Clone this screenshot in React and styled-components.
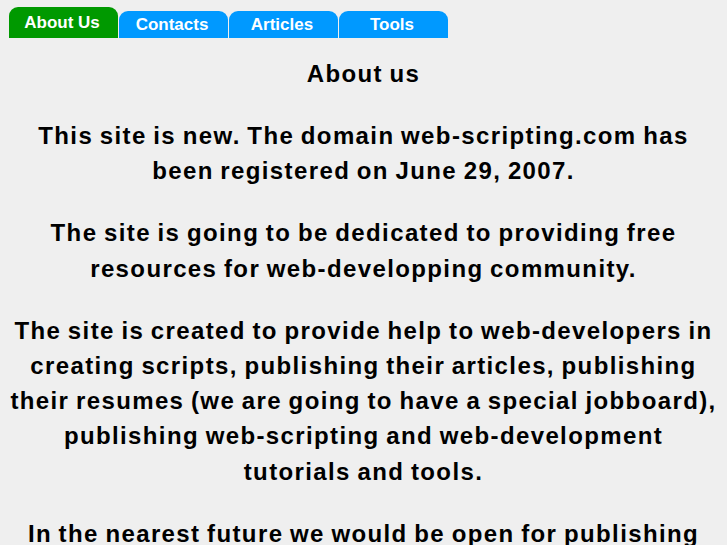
import React from 'react';
import styled, { createGlobalStyle } from 'styled-components';

const GlobalStyle = createGlobalStyle`
  body {
    margin: 0;
    background-color: #efefef;
    font-family: "Liberation Sans", Arial, sans-serif;
  }
`;

const Page = styled.div`
  padding: 7px 0 0 0;
`;

const TabBar = styled.div`
  display: flex;
  align-items: flex-end;
  gap: 1px;
  padding-left: 9px;
  height: 31px;
`;

const Tab = styled.a`
  display: flex;
  align-items: center;
  justify-content: center;
  width: 109px;
  height: ${(p) => (p.$active ? '31px' : '27px')};
  padding: 1px 3px 0 0;
  box-sizing: border-box;
  background-color: ${(p) => (p.$active ? '#009900' : '#0099ff')};
  color: #fff;
  font-weight: bold;
  font-size: 17px;
  text-decoration: none;
  border-radius: 9px 9px 0 0;
`;

// the original face is a bit wider than Arial, so stretch letters and pull words closer
const Content = styled.div`
  text-align: center;
  color: #000;
  font-weight: bold;
  letter-spacing: 1.38px;
  word-spacing: -1.4px;
  padding: 0 8px;
`;

const Heading = styled.h1`
  font-size: 24px;
  margin: 18px 0 27px;
  line-height: 35px;
`;

const Paragraph = styled.p`
  font-size: 24px;
  line-height: 35.2px;
  margin: 0 0 27px;
`;

const tabs = ['About Us', 'Contacts', 'Articles', 'Tools'];

export default function App() {
  return (
    <Page>
      <GlobalStyle />
      <TabBar>
        {tabs.map((t, i) => (
          <Tab key={t} href="#" $active={i === 0}>{t}</Tab>
        ))}
      </TabBar>
      <Content>
        <Heading>About us</Heading>
        <Paragraph>
          This site is new. The domain web-scripting.com has been registered on June 29, 2007.
        </Paragraph>
        <Paragraph>
          The site is going to be dedicated to providing free resources for web-developping community.
        </Paragraph>
        <Paragraph>
          The site is created to provide help to web-developers in creating scripts, publishing their
          articles, publishing their resumes (we are going to have a special jobboard), publishing
          web-scripting and web-development tutorials and tools.
        </Paragraph>
        <Paragraph>
          In the nearest future we would be open for publishing articles and tutorials written by
          other web-developers.
        </Paragraph>
      </Content>
    </Page>
  );
}
